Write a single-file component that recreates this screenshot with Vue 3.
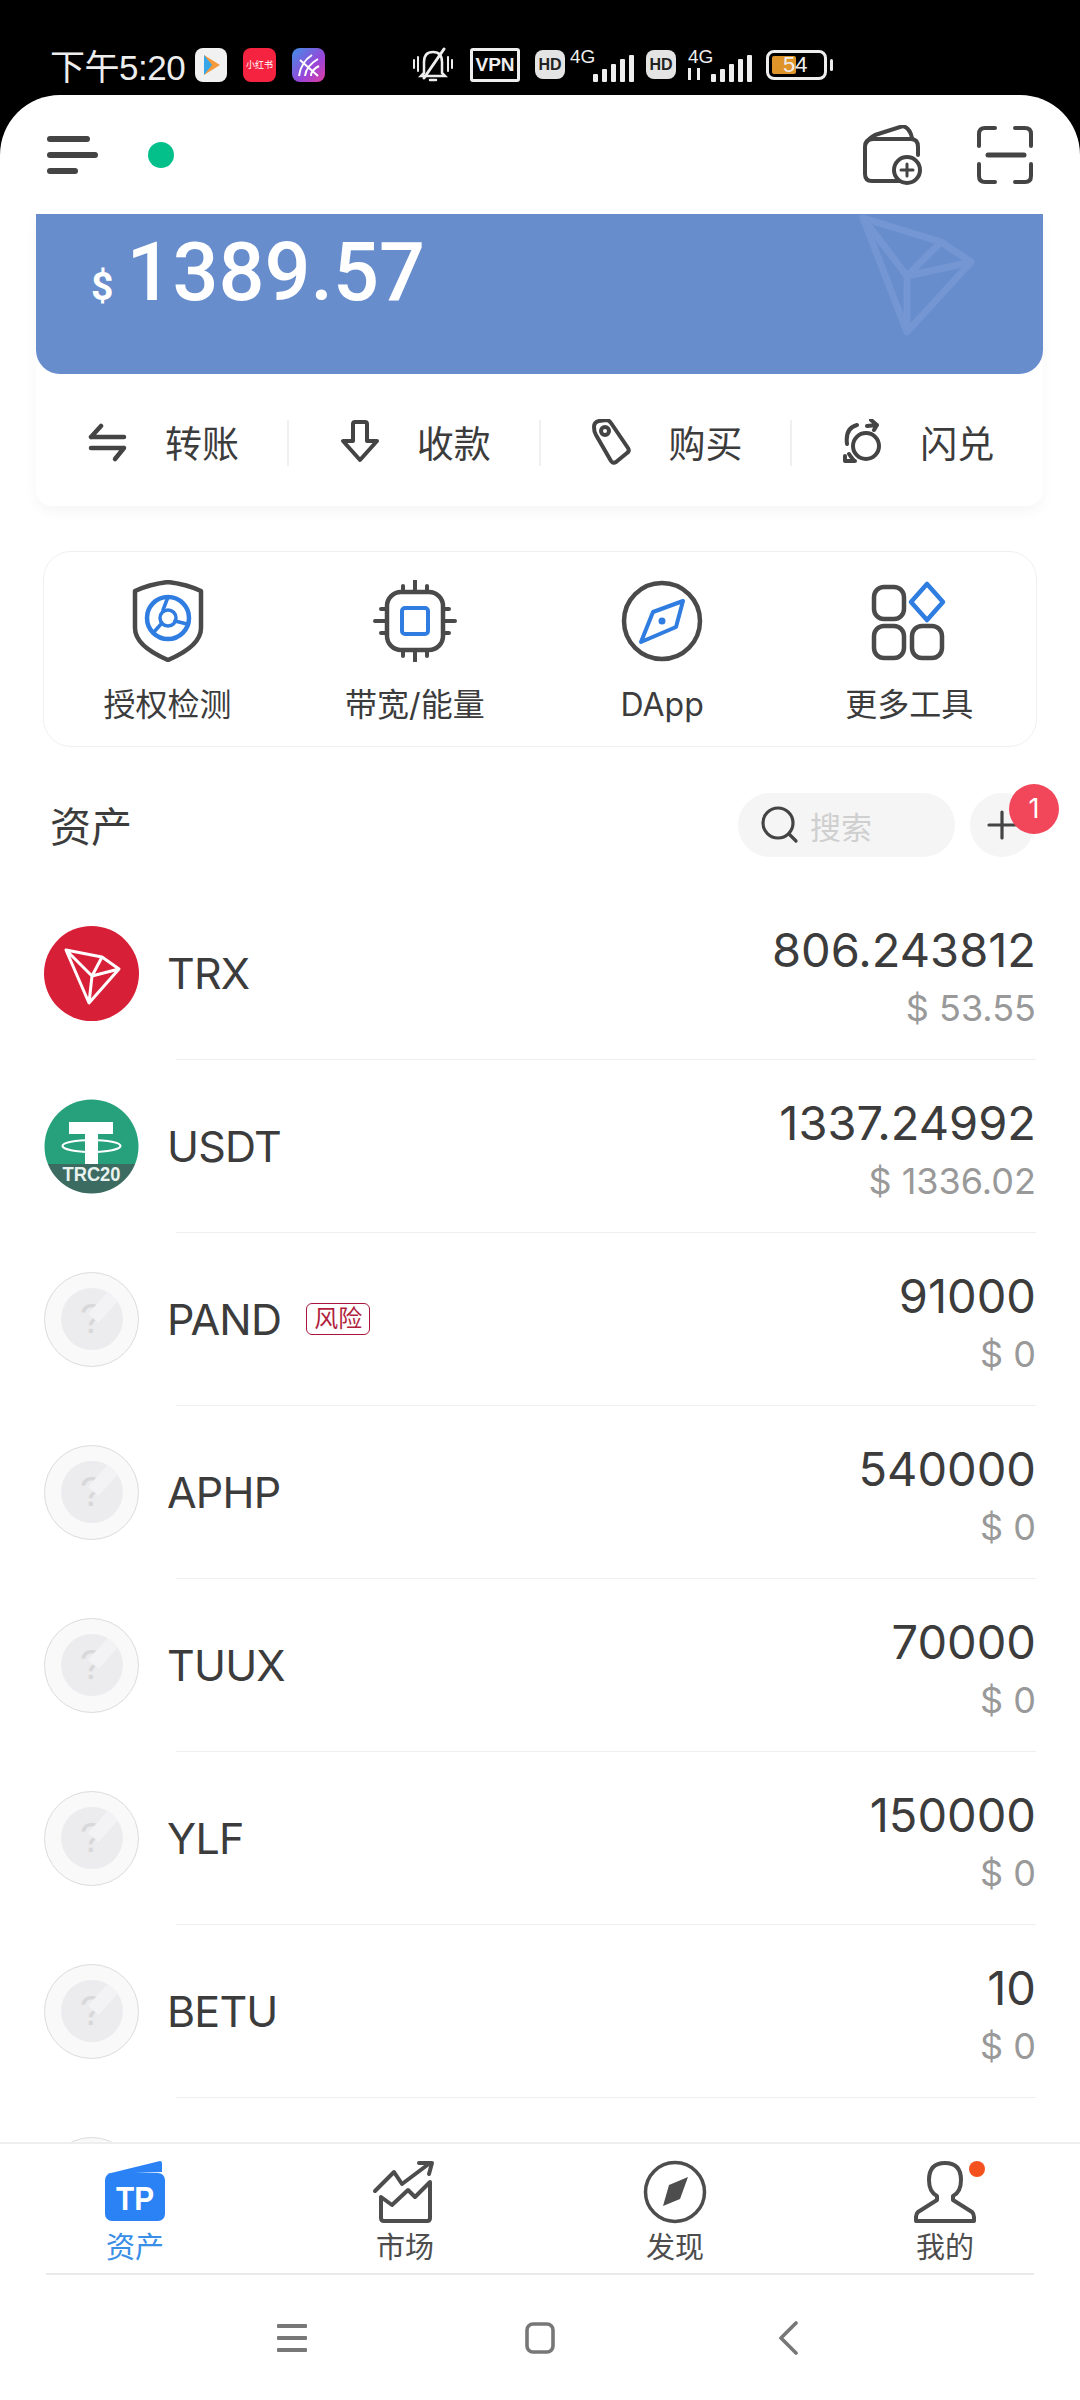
<script setup>
const actions = ['转账', '收款', '购买', '闪兑']

const tools = ['授权检测', '带宽/能量', 'DApp', '更多工具']

// the last row is only just peeking out above the tab bar
const assets = [
  { name: 'TRX', amount: '806.243812', usd: '$ 53.55', type: 'trx' },
  { name: 'USDT', amount: '1337.24992', usd: '$ 1336.02', type: 'usdt' },
  { name: 'PAND', amount: '91000', usd: '$ 0', risk: true },
  { name: 'APHP', amount: '540000', usd: '$ 0' },
  { name: 'TUUX', amount: '70000', usd: '$ 0' },
  { name: 'YLF', amount: '150000', usd: '$ 0' },
  { name: 'BETU', amount: '10', usd: '$ 0' },
  { name: '', amount: '', usd: '' }
]

const tabs = ['资产', '市场', '发现', '我的']
const signalBars = [8, 13, 18, 23, 27]
</script>

<template>
  <div class="phone">
    <!-- status bar -->
    <div class="status">
      <span class="time">下午5:20</span>
      <svg class="tile" width="32" height="34" viewBox="0 0 32 34">
        <rect width="32" height="34" rx="8" fill="#f1f1f1" />
        <path d="M9 7 L25 17 L9 27 Z" fill="#f59a3c" />
        <path d="M9 7 L17 17 L9 27 Z" fill="#35a6e8" />
      </svg>
      <span class="tile-red">小红书</span>
      <svg class="tile tile-purple" width="33" height="34" viewBox="0 0 33 34">
        <defs>
          <linearGradient id="pg" x1="0" y1="0" x2="1" y2="1">
            <stop offset="0" stop-color="#3f8fe8" />
            <stop offset="0.6" stop-color="#9a45d8" />
            <stop offset="1" stop-color="#e23da0" />
          </linearGradient>
        </defs>
        <rect width="33" height="34" rx="8" fill="url(#pg)" />
        <path d="M7 28 Q9 14 20 7 M13 28 Q14 18 26 11 M19 28 Q19 22 27 18 M8 12 L26 28" stroke="#fff" stroke-width="2" fill="none" />
      </svg>
      <svg class="bell" width="44" height="36" viewBox="0 0 44 36" fill="none" stroke="#eee" stroke-width="2.5" stroke-linecap="round">
        <path d="M13 26 V15 Q13 5 22 5 Q31 5 31 15 V26 L34 29 H10 Z" />
        <path d="M19 33 H25" />
        <path d="M33 2 L13 31" stroke-width="3" />
        <path d="M3 13 V21 M7 10 V24 M37 10 V24 M41 13 V21" stroke-width="2" />
      </svg>
      <span class="vpn">VPN</span>
      <span class="hd">HD</span>
      <span class="net">
        <span class="net-label">4G</span>
        <span class="bars"><i v-for="h in signalBars" :key="h" :style="{ height: h + 'px' }"></i></span>
      </span>
      <span class="hd hd-second">HD</span>
      <span class="net net-second">
        <span class="net-label">4G</span>
        <span class="net-arrows"></span>
        <span class="bars"><i v-for="h in signalBars" :key="h" :style="{ height: h + 'px' }"></i></span>
      </span>
      <span class="battery"><span class="battery-fill"></span><span class="battery-num">54</span></span>
      <span class="battery-nub"></span>
    </div>

    <div class="sheet">
      <header class="topbar">
        <div class="menu"><i class="m1"></i><i class="m2"></i><i class="m3"></i></div>
        <span class="online"></span>
        <svg class="wallet-add" width="60" height="60" viewBox="0 0 60 60" fill="none" stroke="#444" stroke-width="4" stroke-linecap="round" stroke-linejoin="round">
          <path d="M36 56 H9 Q2 56 2 49 V22 Q2 14 10 14 H48 Q55 14 55 22 V30" />
          <path d="M3 18 Q6 13 12 10 L40 1 Q47 3 49 13" />
          <circle cx="44" cy="45" r="13" fill="#fff" />
          <path d="M44 39 V51 M38 45 H50" stroke-width="3" />
        </svg>
        <svg class="scan" width="56" height="58" viewBox="0 0 56 58" fill="none" stroke="#444" stroke-width="4" stroke-linecap="round">
          <path d="M2 20 V8 Q2 2 8 2 H18 M38 2 H48 Q54 2 54 8 V20 M2 38 V50 Q2 56 8 56 H18 M38 56 H48 Q54 56 54 50 V38" />
          <path d="M11 29 H47" stroke-width="5" />
        </svg>
      </header>

      <div class="main">
        <section class="balance-card">
          <div class="banner">
            <span class="currency">$</span>
            <span class="total">1389.57</span>
            <svg class="watermark" width="118" height="122" viewBox="0 0 118 122" fill="none" stroke="#7496d2" stroke-width="7" stroke-linejoin="round">
              <path d="M4 4 L82 28 L112 48 L48 118 Z" />
              <path d="M4 4 L48 62 L48 118 M48 62 L112 48 M48 62 L82 28" />
            </svg>
          </div>
          <div class="actions">
            <div v-for="(label, i) in actions" :key="label" class="action" :class="{ 'with-line': i < 3 }">
              <svg class="action-icon" width="40" height="46" viewBox="0 0 40 46" fill="none" stroke="#444" stroke-width="4" stroke-linejoin="round" stroke-linecap="round">
                <template v-if="i === 0">
                  <path d="M3 18 H36 M3 18 L13 7" stroke-width="4.5" />
                  <path d="M3 29 H36 M36 29 L27 40" stroke-width="4.5" />
                </template>
                <template v-else-if="i === 1">
                  <path d="M13 5 Q13 3 15 3 H25 Q27 3 27 5 V22 H37 L20 41 L3 22 H13 Z" />
                </template>
                <template v-else-if="i === 2">
                  <path d="M2 8 Q2 3 7 2 L14 1 Q17 1 19 4 L36 29 Q38 32 35 34 L24 43 Q21 45 19 42 L4 16 Q2 13 2 8 Z" />
                  <circle cx="13" cy="12" r="4" />
                </template>
                <template v-else>
                  <circle cx="23" cy="27" r="13" />
                  <path d="M4 25 Q2 9 14 6 M24 7 L34 6 M28 1 L34 6 L31 11" />
                  <path d="M2 37 V42 H12 Q10 41 6 35" />
                </template>
              </svg>
              <span class="action-label">{{ label }}</span>
            </div>
          </div>
        </section>

        <section class="tools">
          <div v-for="(label, i) in tools" :key="label" class="tool">
            <svg width="84" height="82" viewBox="0 0 84 82" fill="none" stroke-linecap="round" stroke-linejoin="round">
              <template v-if="i === 0">
                <path d="M9 11 Q24 4 42 2 Q60 4 75 11 V48 Q75 66 42 80 Q9 66 9 48 Z" stroke="#4a4a4a" stroke-width="4.5" />
                <circle cx="42" cy="38" r="21" stroke="#2f7de1" stroke-width="4.5" />
                <circle cx="42" cy="38" r="8" stroke="#2f7de1" stroke-width="3.5" />
                <path d="M42 17 L37 30 M61 44 L49 41 M27 53 L36 43" stroke="#2f7de1" stroke-width="3.5" />
              </template>
              <template v-else-if="i === 1">
                <rect x="14" y="12" width="56" height="58" rx="14" stroke="#4a4a4a" stroke-width="4.5" />
                <rect x="29" y="28" width="26" height="26" rx="3" stroke="#2f7de1" stroke-width="4" />
                <path d="M42 1 V12 M30 6 V12 M54 6 V12 M42 70 V81 M30 70 V76 M54 70 V76 M2 41 H14 M8 29 H14 M8 53 H14 M70 41 H82 M70 29 H76 M70 53 H76" stroke="#4a4a4a" stroke-width="4" />
              </template>
              <template v-else-if="i === 2">
                <circle cx="42" cy="41" r="38" stroke="#4a4a4a" stroke-width="4.5" />
                <path d="M63 21 L56 47 L21 62 L33 32 Z" stroke="#2f7de1" stroke-width="4" />
                <circle cx="42" cy="41" r="3.5" fill="#2f7de1" />
              </template>
              <template v-else>
                <rect x="7" y="7" width="30" height="32" rx="10" stroke="#4a4a4a" stroke-width="4.5" />
                <rect x="7" y="46" width="30" height="32" rx="10" stroke="#4a4a4a" stroke-width="4.5" />
                <rect x="45" y="46" width="30" height="32" rx="10" stroke="#4a4a4a" stroke-width="4.5" />
                <path d="M60 4 L76 22 L60 40 L44 22 Z" stroke="#2f7de1" stroke-width="4.5" />
              </template>
            </svg>
            <span class="tool-label">{{ label }}</span>
          </div>
        </section>

        <div class="assets-head">
          <span class="assets-title">资产</span>
          <div class="search">
            <svg width="40" height="40" viewBox="0 0 40 40" fill="none" stroke="#444" stroke-width="3.2" stroke-linecap="round">
              <circle cx="18" cy="18" r="15" />
              <path d="M29 29 L36 36" />
            </svg>
            <span class="search-text">搜索</span>
          </div>
          <div class="add">
            <svg width="30" height="30" viewBox="0 0 30 30" stroke="#444" stroke-width="3.2" stroke-linecap="round">
              <path d="M15 2 V28 M2 15 H28" />
            </svg>
            <span class="badge">1</span>
          </div>
        </div>

        <div class="asset-list">
          <template v-for="(item, index) in assets" :key="index">
            <div class="asset">
              <svg v-if="item.type === 'trx'" class="coin" width="95" height="95" viewBox="0 0 95 95">
                <circle cx="47.5" cy="47.5" r="47.5" fill="#d71f38" />
                <path d="M22 24 L58 31 L75 43 L45 77 Z M22 24 L48 50 L45 77 M48 50 L75 43 M48 50 L58 31" fill="none" stroke="#fff" stroke-width="3" stroke-linejoin="round" />
              </svg>
              <svg v-else-if="item.type === 'usdt'" class="coin" width="95" height="95" viewBox="0 0 95 95">
                <defs>
                  <clipPath id="usdt-clip"><circle cx="47.5" cy="47.5" r="47" /></clipPath>
                </defs>
                <g clip-path="url(#usdt-clip)">
                  <rect width="95" height="65" fill="#26a17b" />
                  <rect y="65" width="95" height="30" fill="#3c6b62" />
                </g>
                <path d="M25 23 H69 V35 H54 V65 H41 V35 H25 Z" fill="#fff" />
                <ellipse cx="47.5" cy="47" rx="29" ry="6" fill="none" stroke="#fff" stroke-width="2.2" />
                <text x="47.5" y="82" class="trc" text-anchor="middle" textLength="58" lengthAdjust="spacingAndGlyphs">TRC20</text>
              </svg>
              <div v-else class="coin unknown">
                <div v-if="item.name" class="unknown-inner">?</div>
              </div>
              <span class="asset-name">{{ item.name }}</span>
              <span v-if="item.risk" class="risk">风险</span>
              <div class="asset-values">
                <div class="amount">{{ item.amount }}</div>
                <div class="usd">{{ item.usd }}</div>
              </div>
            </div>
            <div class="divider"></div>
          </template>
        </div>
      </div>

      <nav class="tabs">
        <div v-for="(label, i) in tabs" :key="label" class="tab" :class="{ active: i === 0 }">
          <svg width="66" height="64" viewBox="0 0 66 64" fill="none" stroke="#4d4d4d" stroke-width="4" stroke-linejoin="round" stroke-linecap="round">
            <template v-if="i === 0">
              <path d="M5 14 L58 1 Q60 1 60 4 V12 Z" fill="#2a82f5" stroke="none" />
              <rect x="3" y="13" width="60" height="48" rx="7" fill="#2a82f5" stroke="none" />
              <text x="33" y="50" class="tp" text-anchor="middle" textLength="38" lengthAdjust="spacingAndGlyphs">TP</text>
            </template>
            <template v-else-if="i === 1">
              <path d="M9 37 V58 Q9 61 12 61 H55 Q58 61 58 58 V22 L43 37 L36 30 L20 45 Z" />
              <path d="M3 31 L22 12 L30 24 L58 3 M47 3 H60 L57 14" stroke-width="4" />
            </template>
            <template v-else-if="i === 2">
              <circle cx="33" cy="32" r="29.5" stroke-width="3.5" />
              <path d="M46 17 L38 39 L21 46 L27 25 Z" fill="#4d4d4d" stroke="none" />
            </template>
            <template v-else>
              <path d="M33 3 Q49 3 49 20 Q49 32 41 36 V40 L60 52 Q62 54 62 57 V61 H4 V57 Q4 54 6 52 L25 40 V36 Q17 32 17 20 Q17 3 33 3 Z" />
            </template>
          </svg>
          <span v-if="i === 3" class="tab-dot"></span>
          <span class="tab-label">{{ label }}</span>
        </div>
      </nav>
      <div class="tabs-line"></div>

      <div class="navbar">
        <svg width="30" height="30" viewBox="0 0 30 30" fill="#777">
          <rect y="1" width="30" height="4" rx="1" />
          <rect y="13" width="30" height="4" rx="1" />
          <rect y="25" width="30" height="4" rx="1" />
        </svg>
        <svg width="30" height="32" viewBox="0 0 30 32" fill="none" stroke="#777" stroke-width="3.6">
          <rect x="2" y="2" width="26" height="28" rx="6" />
        </svg>
        <svg class="nav-back" width="20" height="34" viewBox="0 0 20 34" fill="none" stroke="#777" stroke-width="3.6" stroke-linecap="round" stroke-linejoin="round">
          <path d="M18 2 L3 17 L18 32" />
        </svg>
      </div>
    </div>
  </div>
</template>

<style scoped>
.phone {
  width: 1080px;
  height: 2400px;
  background: #000;
  overflow: hidden;
  display: flex;
  flex-direction: column;
  font-family: Inter, "Noto Sans CJK SC", sans-serif;
  color: #3c3c3c;
}

.status {
  height: 95px;
  flex: none;
  display: flex;
  align-items: center;
  padding: 34px 0 0 50px;
  box-sizing: border-box;
  color: #eee;
}

.time {
  font-family: "Liberation Sans", "Noto Sans CJK SC", sans-serif;
  font-size: 35px;
  letter-spacing: -0.5px;
  width: 145px;
  white-space: nowrap;
}

.tile-red {
  width: 33px;
  height: 34px;
  margin-left: 16px;
  border-radius: 8px;
  background: #f5233f;
  color: #fff;
  font-size: 9px;
  line-height: 34px;
  text-align: center;
  white-space: nowrap;
}

.tile-purple {
  margin-left: 16px;
}

.bell {
  margin-left: 86px;
}

.vpn {
  width: 44px;
  height: 28px;
  margin-left: 15px;
  border: 3px solid #eee;
  border-radius: 3px;
  font-family: "Liberation Sans", sans-serif;
  font-size: 19px;
  font-weight: 700;
  line-height: 28px;
  text-align: center;
}

.hd {
  width: 30px;
  height: 29px;
  margin-left: 15px;
  border-radius: 8px;
  background: #e4e4e4;
  color: #222;
  font-family: "Liberation Sans", sans-serif;
  font-size: 16px;
  font-weight: 700;
  line-height: 29px;
  text-align: center;
}

.net {
  position: relative;
  width: 64px;
  height: 34px;
  margin-left: 5px;
}

.net-label {
  position: absolute;
  left: 0;
  top: -2px;
  font-family: "Liberation Sans", sans-serif;
  font-size: 19px;
}

.net-arrows {
  position: absolute;
  left: 0;
  bottom: 2px;
  width: 12px;
  height: 12px;
  border-left: 3px solid #eee;
  border-right: 3px solid #eee;
  box-sizing: border-box;
}

.bars {
  position: absolute;
  right: 0;
  bottom: 0;
  display: flex;
  align-items: flex-end;
  gap: 4px;
}

.bars i {
  display: block;
  width: 5px;
  border-radius: 1px;
  background: #eee;
}

.hd-second {
  margin-left: 12px;
}

.net-second {
  margin-left: 12px;
}

.battery {
  position: relative;
  width: 55px;
  height: 24px;
  margin-left: 14px;
  border: 3px solid #eee;
  border-radius: 8px;
}

.battery-fill {
  position: absolute;
  left: 3px;
  top: 3px;
  width: 24px;
  height: 18px;
  background: #df942a;
  border-radius: 2px;
}

.battery-num {
  position: absolute;
  left: 14px;
  top: -1px;
  font-family: "Liberation Sans", sans-serif;
  font-size: 22px;
  line-height: 26px;
}

.battery-nub {
  width: 3px;
  height: 12px;
  margin-left: 3px;
  border-radius: 2px;
  background: #eee;
}

.sheet {
  flex: 1;
  min-height: 0;
  background: #fff;
  border-radius: 60px 60px 0 0;
  display: flex;
  flex-direction: column;
  overflow: hidden;
}

.topbar {
  height: 119px;
  flex: none;
  display: flex;
  align-items: center;
  padding-left: 47px;
}

.menu {
  width: 51px;
}

.menu i {
  display: block;
  height: 6px;
  border-radius: 3px;
  background: #444;
}

.m1 {
  width: 43px;
}

.m2 {
  width: 51px;
  margin: 10px 0;
}

.m3 {
  width: 31px;
}

.online {
  width: 26px;
  height: 26px;
  margin-left: 50px;
  border-radius: 50%;
  background: #03c08a;
}

.wallet-add {
  margin-left: auto;
}

.scan {
  margin: 0 47px 0 54px;
}

.main {
  flex: 1;
  min-height: 0;
  overflow: hidden;
}

.balance-card {
  margin: 0 37px 0 36px;
  background: #fff;
  border-radius: 0 0 16px 16px;
  box-shadow: 0 6px 14px rgba(0, 0, 0, 0.04);
}

.banner {
  position: relative;
  height: 160px;
  background: #678dcd;
  border-radius: 0 0 24px 24px;
  color: #fff;
  display: flex;
  align-items: flex-start;
  padding: 13px 0 0 55px;
  box-sizing: border-box;
  overflow: hidden;
}

.currency {
  font-family: Roboto, sans-serif;
  font-size: 39px;
  font-weight: 700;
  margin: 37px 13px 0 0;
}

.total {
  font-family: Roboto, sans-serif;
  font-size: 81px;
  font-weight: 500;
  line-height: 92px;
}

.watermark {
  position: absolute;
  left: 823px;
  top: 0;
}

.actions {
  height: 132px;
  display: flex;
  padding-top: 4px;
  box-sizing: border-box;
}

.action {
  position: relative;
  width: 252px;
  display: flex;
  align-items: center;
  gap: 37px;
  padding-left: 52px;
  box-sizing: border-box;
}

.with-line::after {
  content: "";
  position: absolute;
  right: -1px;
  top: 42px;
  width: 2px;
  height: 46px;
  background: #f0f0f0;
}

.action-label {
  font-size: 37px;
  white-space: nowrap;
}

.tools {
  height: 196px;
  margin: 45px 43px 0 43px;
  padding-right: 3px;
  border: 1px solid #efefef;
  border-radius: 28px;
  display: flex;
  box-sizing: border-box;
}

.tool {
  flex: 1;
  display: flex;
  flex-direction: column;
  align-items: center;
  padding-top: 28px;
}

.tool-label {
  margin-top: 21px;
  font-size: 32px;
  line-height: 44px;
  white-space: nowrap;
}

.assets-head {
  display: flex;
  align-items: center;
  height: 64px;
  margin-top: 46px;
  padding-left: 50px;
}

.assets-title {
  font-size: 41px;
  margin-top: -2px;
}

.search {
  width: 217px;
  height: 64px;
  margin-left: auto;
  padding-left: 22px;
  box-sizing: border-box;
  border-radius: 32px;
  background: #f5f5f6;
  display: flex;
  align-items: center;
  gap: 10px;
}

.search-text {
  font-size: 31px;
  color: #cfcfcf;
}

.add {
  position: relative;
  width: 64px;
  height: 64px;
  margin: 0 46px 0 15px;
  border-radius: 50%;
  background: #f5f5f6;
  display: flex;
  align-items: center;
  justify-content: center;
}

.badge {
  position: absolute;
  left: 39px;
  top: -9px;
  width: 50px;
  height: 50px;
  border-radius: 50%;
  background: #f2475a;
  color: #fff;
  font-size: 27px;
  line-height: 50px;
  text-align: center;
}

.asset-list {
  margin-top: 30px;
}

.asset {
  height: 172px;
  display: flex;
  align-items: center;
  padding: 0 44px;
}

.coin {
  flex: none;
  width: 95px;
  height: 95px;
}

.trc {
  font-family: "Liberation Sans", sans-serif;
  font-size: 21px;
  font-weight: 700;
  fill: #e8f2ef;
}

.unknown {
  border-radius: 50%;
  border: 1.5px solid #dcdcdc;
  box-sizing: border-box;
  display: flex;
  align-items: center;
  justify-content: center;
  background: #f9f9fa;
}

.unknown-inner {
  position: relative;
  width: 62px;
  height: 62px;
  overflow: hidden;
  border-radius: 50%;
  background: #ececee;
  color: #d8d8da;
  font-family: "Liberation Sans", sans-serif;
  font-size: 42px;
  line-height: 62px;
  text-align: center;
}

/* pale diagonal sheen across the placeholder coin */
.unknown-inner::after {
  content: "";
  position: absolute;
  left: 40px;
  top: -8px;
  width: 14px;
  height: 44px;
  background: #f3f3f5;
  transform: rotate(42deg);
}

.asset-name {
  margin-left: 28px;
  font-size: 43px;
  letter-spacing: -0.8px;
}

.risk {
  width: 64px;
  height: 32px;
  margin-left: 25px;
  border: 1.5px solid #a8163c;
  border-radius: 6px;
  box-sizing: border-box;
  color: #b01e3c;
  font-size: 24px;
  line-height: 29px;
  text-align: center;
}

.asset-values {
  margin-left: auto;
  margin-top: 8px;
  text-align: right;
}

.amount {
  font-size: 47px;
  line-height: 52px;
}

.usd {
  margin-top: 10px;
  font-size: 36px;
  line-height: 44px;
  color: #999;
}

.divider {
  height: 1px;
  margin: 0 44px 0 176px;
  background: #efefef;
}

.tabs {
  height: 131px;
  flex: none;
  display: flex;
  border-top: 2px solid #eeeeee;
  box-sizing: border-box;
  background: #fff;
}

.tab {
  position: relative;
  flex: 1;
  display: flex;
  flex-direction: column;
  align-items: center;
  padding-top: 16px;
}

.tab-dot {
  position: absolute;
  left: 159px;
  top: 17px;
  width: 16px;
  height: 16px;
  border-radius: 50%;
  background: #f4511e;
}

.tab-label {
  margin-top: 4px;
  font-size: 29px;
  line-height: 40px;
  color: #4d4d4d;
}

.tab.active .tab-label {
  color: #3a8ee6;
}

.tp {
  font-family: "Liberation Sans", sans-serif;
  font-size: 34px;
  font-weight: 700;
  fill: #fff;
  stroke: none;
}

.tabs-line {
  height: 2px;
  flex: none;
  margin: 0 46px;
  background: #eaeaea;
}

.navbar {
  height: 125px;
  flex: none;
  display: flex;
  align-items: center;
  justify-content: center;
  gap: 218px;
  padding-right: 5px;
  box-sizing: border-box;
}

.nav-back {
  margin-left: 5px;
}
</style>

<style>
html,
body {
  background: #000;
}
</style>
